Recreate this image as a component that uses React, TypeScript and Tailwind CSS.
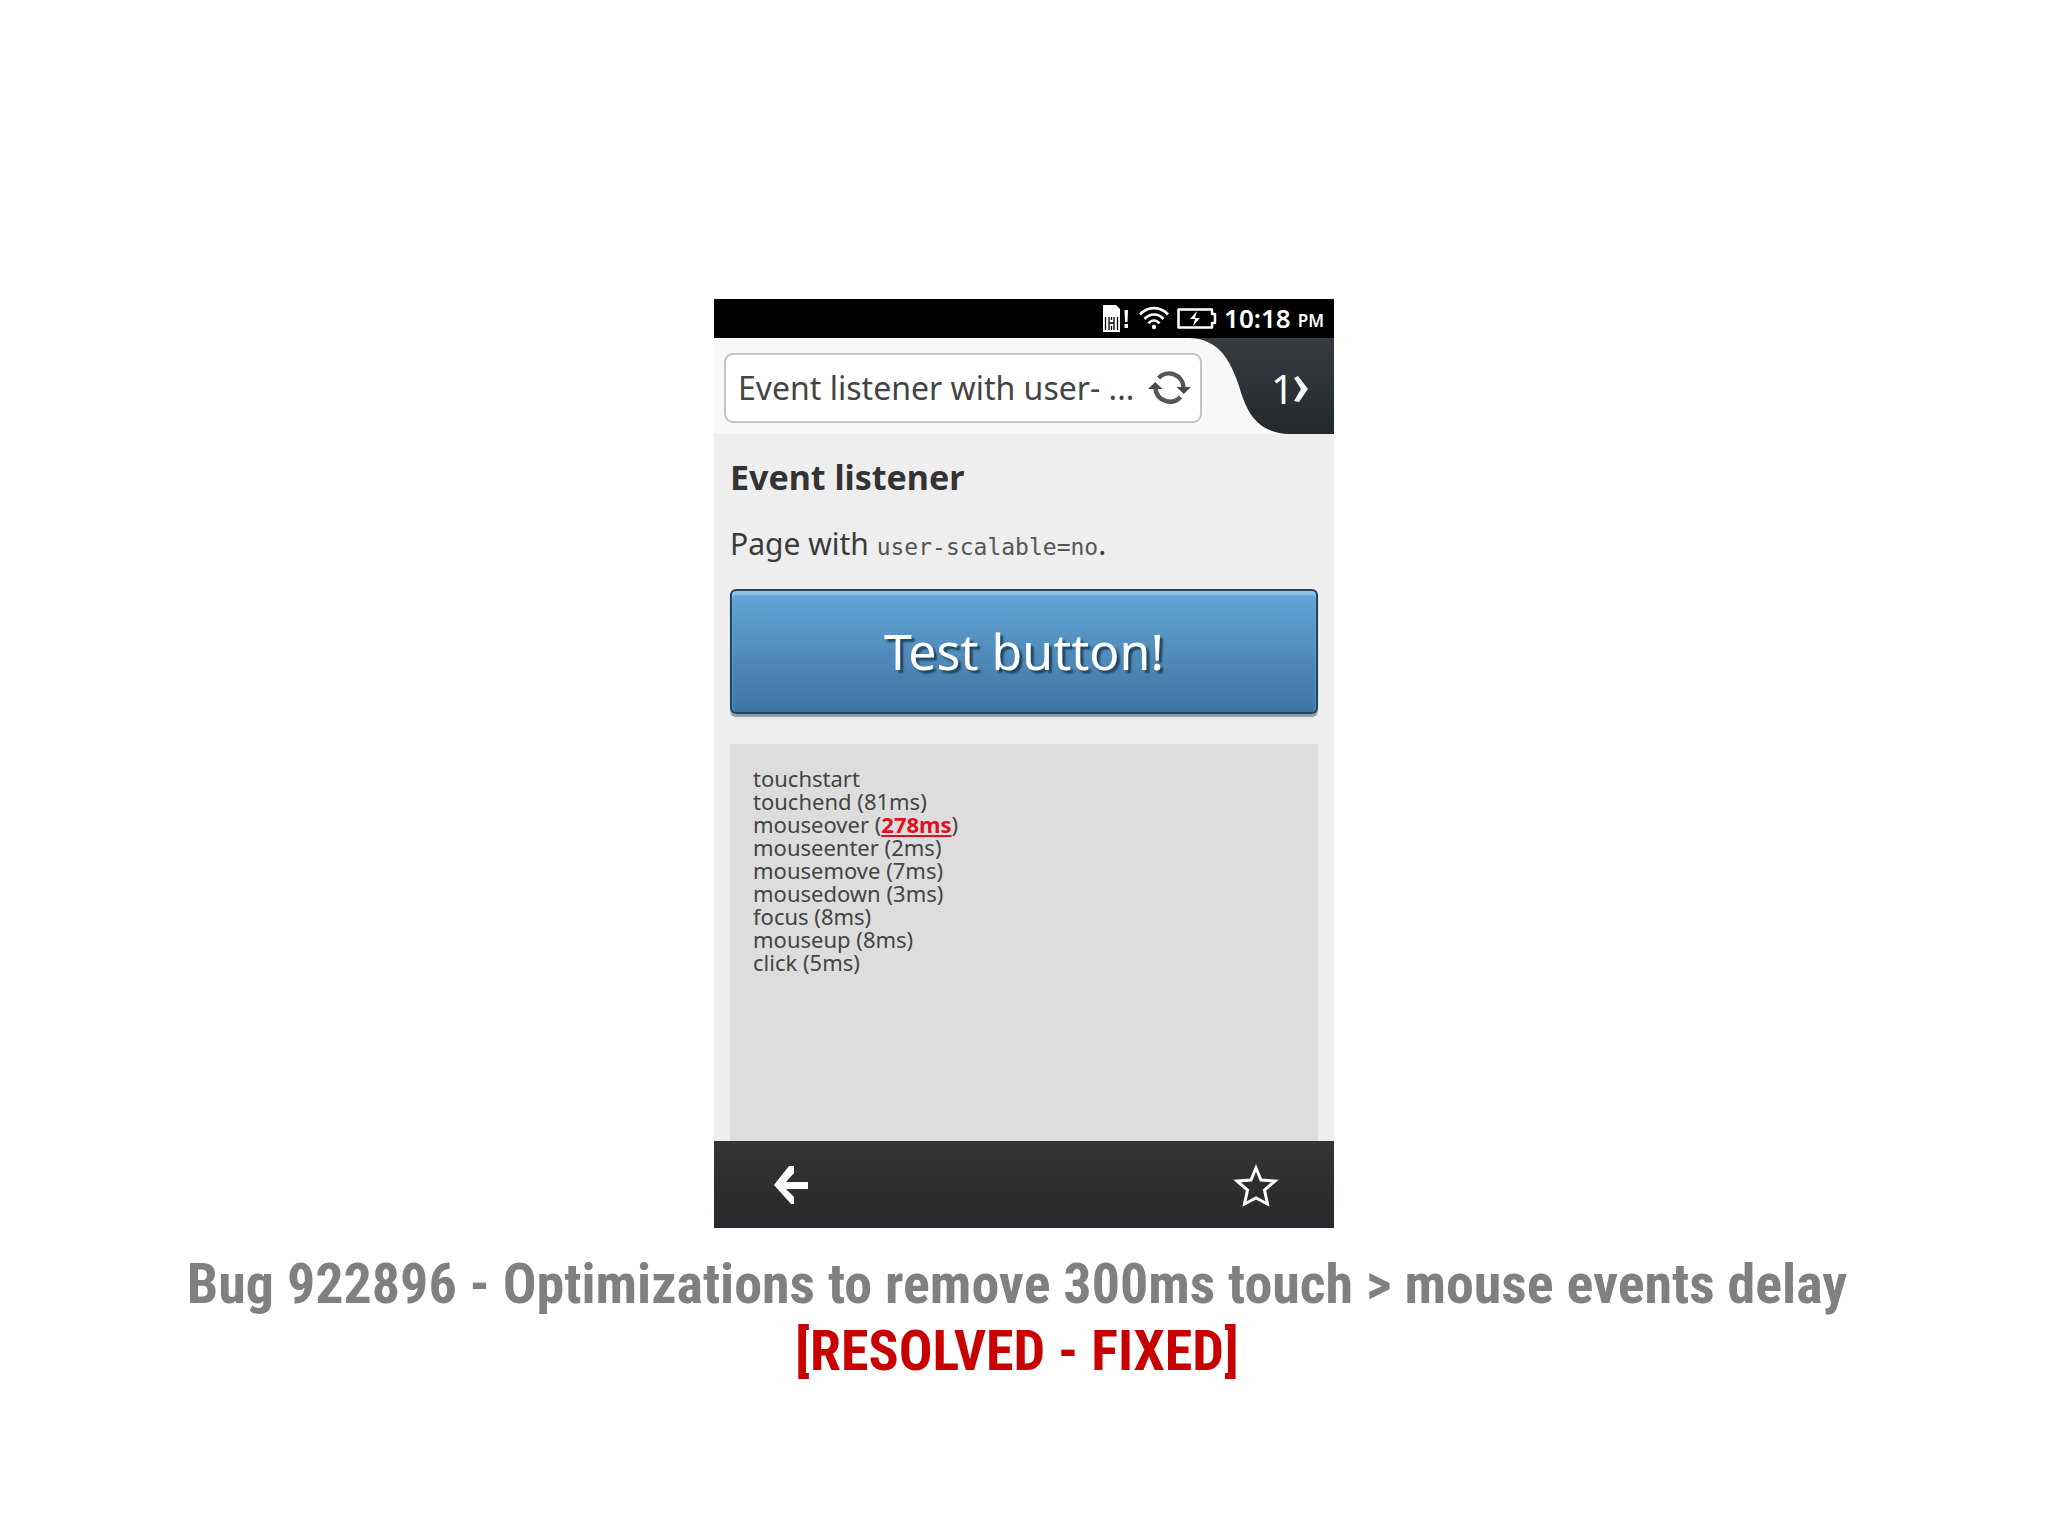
import React from 'react';

type LogEntry = {
  name: string;
  delay?: string;
  slow?: boolean;
};

const events: LogEntry[] = [
  { name: 'touchstart' },
  { name: 'touchend', delay: '81ms' },
  { name: 'mouseover', delay: '278ms', slow: true },
  { name: 'mouseenter', delay: '2ms' },
  { name: 'mousemove', delay: '7ms' },
  { name: 'mousedown', delay: '3ms' },
  { name: 'focus', delay: '8ms' },
  { name: 'mouseup', delay: '8ms' },
  { name: 'click', delay: '5ms' },
];

const StatusBar: React.FC = () => (
  <div className="flex h-[39px] items-center justify-end bg-black pr-[10px] pb-[2px] text-white">
    <svg className="mr-[10px] h-[28px] w-[26px]" viewBox="0 0 26 28" fill="none">
      <path d="M0 1H13L17 5V28H0Z" fill="#fff" />
      <path d="M2.500 13V26M6 13V26M11 13V26M14.500 13V26M6 19H11M8.500 13V16M8.500 22V26" stroke="#000" strokeWidth="1.300" />
      <path d="M21.500 6H25L24.500 18H22ZM21.500 20H25V24H21.500Z" fill="#fff" />
    </svg>
    <svg className="mr-[8px] h-[24px] w-[30px]" viewBox="0 0 30 24" fill="none" stroke="#fff" strokeWidth="2.600">
      <path d="M1 8.500C9 0 21 0 29 8.500M5.500 13C11 7 19 7 24.500 13M9.500 17.500C12.500 13.500 17.500 13.500 20.500 17.500" />
      <circle cx="15" cy="21" r="2.200" fill="#fff" stroke="none" />
    </svg>
    <svg className="mr-[7px] h-[22px] w-[40px]" viewBox="0 0 40 22" fill="none">
      <path d="M1.500 2.500H35V7H38V16H35V20.500H1.500Z" stroke="#fff" strokeWidth="2.500" strokeLinejoin="round" />
      <path d="M20 4L13 12H18L16 19L23 11H18Z" fill="#fff" />
    </svg>
    <span className="text-[26px] leading-none font-semibold">10:18</span>
    <span className="ml-[7px] pt-[6px] text-[17px] leading-none font-semibold">PM</span>
  </div>
);

const AddressBar: React.FC = () => (
  <div className="flex h-[96px] bg-[#f8f8f8]">
    <div className="flex min-w-0 flex-1 items-center pl-[10px]">
      <div className="mt-[3px] flex h-[70px] min-w-0 flex-1 items-center rounded-[9px] border-2 border-[#c4c4c4] bg-white pr-[9px] pl-[12px]">
        <input
          type="text"
          aria-label="Address"
          readOnly
          value="Event listener with user- ..."
          className="min-w-0 flex-1 bg-transparent text-[32px] text-[#444] outline-none"
        />
        <button type="button" aria-label="Reload" className="shrink-0">
          <svg className="h-[38px] w-[44px]" viewBox="0 0 44 38" fill="none">
            <path d="M11.500 9A14.500 14.500 0 0 1 36.500 18" stroke="#555" strokeWidth="4.500" />
            <path d="M33.500 28A14.500 14.500 0 0 1 8.500 20" stroke="#555" strokeWidth="4.500" />
            <path d="M29.500 18H44L36.800 25ZM1 20H15.500L8.200 13Z" fill="#4a4a4a" />
          </svg>
        </button>
      </div>
    </div>
    <button type="button" aria-label="1 open tab" className="relative -ml-[12px] flex w-[144px] shrink-0 items-center justify-end pr-[26px]">
      <svg className="absolute inset-0 h-full w-full" viewBox="0 0 144 96">
        <defs>
          <linearGradient id="tab" x1="0" y1="0" x2="0" y2="1">
            <stop offset="0" stopColor="#363c40" />
            <stop offset="1" stopColor="#22282c" />
          </linearGradient>
        </defs>
        <path d="M0 0C28 1 40 21 49 48C57 76 68 95 100 96H144V0Z" fill="url(#tab)" />
      </svg>
      <span className="relative pt-[6px] text-[40px] leading-none text-white">1</span>
      <svg className="relative mt-[6px] h-[28px] w-[14px]" viewBox="0 0 14 28">
        <path d="M0 3L4 1L14 14L5 27L0 26L7 14Z" fill="#f2f8fa" />
      </svg>
    </button>
  </div>
);

const EventPage: React.FC = () => (
  <div className="flex flex-col bg-[#eeeeef] px-[16px] text-[#3a3a3a]">
    <h1 className="mt-[19px] text-[34px] leading-[48px] font-bold text-[#333]">Event listener</h1>
    <p className="mt-[19px] text-[30px] leading-[48px]">
      Page with <code className="font-['DejaVu_Sans_Mono',monospace] text-[23px] text-[#555]">user-scalable=no</code>.
    </p>
    <button
      type="button"
      className="mt-[18px] h-[125px] rounded-[6px] border-2 border-[#1b4562] bg-linear-to-b from-[#64a6d6] to-[#3f74a3] text-[50px] text-white shadow-[inset_0_4px_2px_#8fc4e8,0_3px_1px_#8f9aa2] text-shadow-[3px_3px_2px_#1f4763]"
    >
      Test button!
    </button>
    <ul className="mt-[30px] h-[397px] bg-[#ddd] px-[23px] pt-[23px] text-[22px] leading-[23px] text-[#444]">
      {events.map((event) => (
        <li key={event.name}>
          {event.name}
          {event.delay && (
            <>
              {' ('}
              {event.slow ? <strong className="text-[#e01020] underline">{event.delay}</strong> : event.delay}
              {')'}
            </>
          )}
        </li>
      ))}
    </ul>
  </div>
);

const Toolbar: React.FC = () => (
  <div className="flex h-[87px] items-center justify-between bg-linear-to-b from-[#343434] to-[#28292c] pr-[55px] pl-[60px]">
    <button type="button" aria-label="Back">
      <svg className="h-[40px] w-[35px]" viewBox="0 0 35 40">
        <path d="M15 1H20V8L12 17H34V24H12L20 32V39H17L0 20Z" fill="#fff" />
      </svg>
    </button>
    <button type="button" aria-label="Bookmark">
      <svg className="h-[44px] w-[46px]" viewBox="0 0 46 44" fill="none" stroke="#fff" strokeWidth="3">
        <path d="M23 5L28 17L42 18L31.500 27L34.500 41L23 35L11.500 41L14.500 27L4 18L18 17Z" />
      </svg>
    </button>
  </div>
);

const App: React.FC = () => {
  return (
    <main className="flex min-h-screen flex-col items-center bg-white pt-[299px] font-['Noto_Sans','Open_Sans',sans-serif]">
      <section className="flex w-full max-w-[620px] flex-col">
        <StatusBar />
        <AddressBar />
        <EventPage />
        <Toolbar />
      </section>
      <p className="mt-[23px] pr-[14px] text-center font-['Roboto_Condensed','Roboto',sans-serif] text-[56px] leading-[67px] font-bold text-[#808082]">
        Bug 922896 - Optimizations to remove 300ms touch &gt; mouse events delay
        <br />
        <span className="text-[#c80000]">[RESOLVED - FIXED]</span>
      </p>
    </main>
  );
};

export default App;
